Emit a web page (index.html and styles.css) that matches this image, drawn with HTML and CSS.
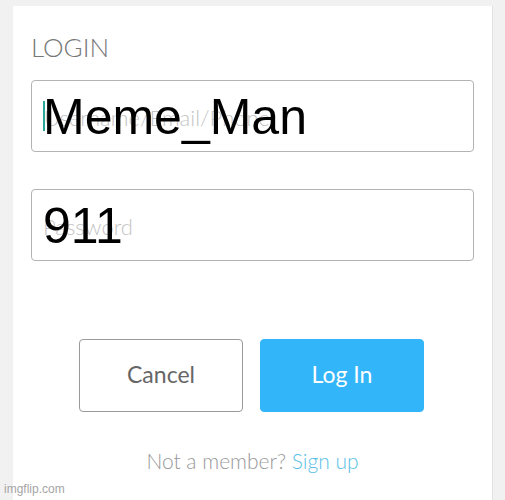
FILE: index.html
```html
<!DOCTYPE html>
<html lang="en">
<head>
  <meta charset="UTF-8" />
  <title>Login</title>
  <link rel="stylesheet" href="styles.css">
</head>
<body>
  <div class="card">
    <h2 class="title">LOGIN</h2>

    <div class="field">
      <div class="input">
        <span class="caret"></span>
        <span class="placeholder">Username/Email/Phone</span>
      </div>
      <span class="meme meme-user">Meme_Man</span>
    </div>

    <div class="field">
      <div class="input">
        <span class="placeholder">Password</span>
      </div>
      <span class="meme meme-pass">911</span>
    </div>

    <div class="actions">
      <button class="btn btn-cancel">Cancel</button>
      <button class="btn btn-login">Log In</button>
    </div>

    <p class="signup">Not a member? <a href="#">Sign up</a></p>
  </div>

  <span class="watermark">imgflip.com</span>
</body>
</html>
```

FILE: styles.css
```css
body {
  margin: 0;
  padding: 6px 0 0 13px;
  background: #f1f1f1;
  font-family: 'Lato', sans-serif;
  height: 494px;
  overflow: hidden;
  position: relative;
}
.card {
  width: 443px;
  height: 500px;
  background: #fff;
  border-right: 1px solid #e2e2e2;
  padding: 0 18px;
}
.title {
  margin: 0;
  padding-top: 25px;
  font-size: 26px;
  line-height: 32px;
  font-weight: 300;
  color: #777;
}
.field {
  position: relative;
  margin-top: 17px;
}
.field + .field {
  margin-top: 37px;
}
.input {
  box-sizing: border-box;
  height: 72px;
  border: 1px solid #b3b3b3;
  border-radius: 4px;
  padding: 0 11px;
  display: flex;
  align-items: center;
}
.placeholder {
  font-size: 22px;
  font-weight: 300;
  color: #c4c4c4;
  padding-top: 2px;
}
.caret {
  width: 2px;
  height: 30px;
  margin-right: -1px;
  background: #2aa79b;
}
.meme {
  position: absolute;
  left: 12px;
  font-family: 'Liberation Sans', Arial, sans-serif;
  font-size: 50px;
  line-height: 1;
  color: #000;
}
.meme-user {
  top: 12px;
}
.meme-pass {
  left: 12px;
  top: 12px;
}
.actions {
  display: flex;
  justify-content: center;
  gap: 17px;
  margin-top: 78px;
  padding-right: 2px;
}
.btn {
  width: 164px;
  height: 73px;
  padding: 0 0 4px;
  border-radius: 4px;
  font-family: 'Lato', sans-serif;
  font-size: 23px;
  cursor: pointer;
}
.btn-cancel {
  background: #fff;
  border: 1px solid #9a9a9a;
  color: #666;
}
.btn-login {
  background: #33b5fa;
  border: 1px solid #33b5fa;
  color: #fff;
}
.signup {
  margin: 36px 0 0;
  text-align: center;
  font-size: 21px;
  font-weight: 300;
  color: #999;
}
.signup a {
  color: #5bbfe6;
  text-decoration: none;
}
.watermark {
  position: absolute;
  left: 4px;
  bottom: 4px;
  font-family: 'Liberation Sans', Arial, sans-serif;
  font-size: 12px;
  color: #a5a5a5;
}
```
